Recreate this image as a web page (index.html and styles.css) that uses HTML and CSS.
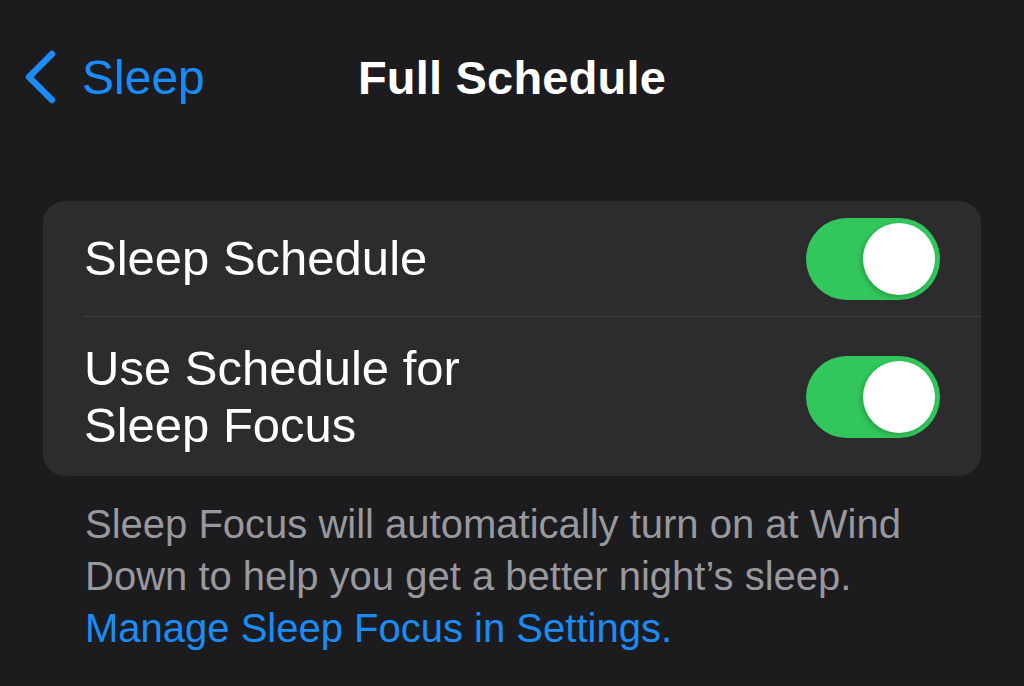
FILE: index.html
```html
<!DOCTYPE html>
<html lang="en">
<head>
    <meta charset="UTF-8">
    <meta name="viewport" content="width=device-width, initial-scale=1.0">
    <title>Full Schedule</title>
    <link rel="stylesheet" href="styles.css">
</head>
<body>

<!-- Nav bar -->
<div class="navbar">
    <a class="back">
        <svg class="chevron" width="36" height="54" viewBox="0 0 36 54">
            <path d="M30 4 L7 27 L30 50" fill="none" stroke="#1a8cf7" stroke-width="6.5" stroke-linecap="round" stroke-linejoin="round"/>
        </svg>
        <span>Sleep</span>
    </a>
    <div class="title">Full Schedule</div>
    <div></div>
</div>

<!-- Settings card -->
<div class="card">
    <div class="row row-single">
        <div class="label">Sleep Schedule</div>
        <div class="toggle on"><div class="knob"></div></div>
    </div>
    <div class="divider"></div>
    <div class="row row-double">
        <div class="label">Use Schedule for<br>Sleep Focus</div>
        <div class="toggle on"><div class="knob"></div></div>
    </div>
</div>

<p class="footer">
    Sleep Focus will automatically turn on at Wind<br>
    Down to help you get a better night’s sleep.<br>
    <a class="link">Manage Sleep Focus in Settings.</a>
</p>

</body>
</html>
```

FILE: styles.css
```css
body {
    font-family: 'Liberation Sans', Arial, sans-serif;
    margin: 0;
    padding: 0;
    background-color: #1c1c1e;
    color: #fff;
    height: 686px;
    overflow: hidden;
}

.navbar {
    display: grid;
    grid-template-columns: 1fr auto 1fr;
    align-items: center;
    height: 154px;
}

.back {
    display: flex;
    align-items: center;
    padding-left: 22px;
    color: #1a8cf7;
    font-size: 48px;
}

.chevron {
    margin-right: 24px;
}

.title {
    font-size: 47px;
    font-weight: bold;
    letter-spacing: 0.2px;
}

.card {
    margin: 47px 43px 0;
    background: #2c2c2e;
    border-radius: 22px;
}

.row {
    display: flex;
    align-items: center;
    justify-content: space-between;
    padding: 0 41px 0 41px;
}

.row-single {
    height: 115px;
}

.row-double {
    height: 159px;
}

.label {
    font-size: 49px;
    line-height: 57px;
}

.divider {
    height: 1px;
    margin-left: 40px;
    background: #3d3d40;
}

.toggle {
    width: 134px;
    height: 82px;
    border-radius: 41px;
    background: #31c75a;
    display: flex;
    align-items: center;
    justify-content: flex-end;
    padding: 0 5px;
    box-sizing: border-box;
}

.knob {
    width: 72px;
    height: 72px;
    border-radius: 50%;
    background: #fff;
    box-shadow: -2px 2px 5px rgba(0, 0, 0, 0.2);
}

.footer {
    margin: 22px 0 0;
    padding-left: 85px;
    font-size: 40px;
    line-height: 52px;
    color: #98989e;
}

.link {
    color: #1a8cf7;
}
```
